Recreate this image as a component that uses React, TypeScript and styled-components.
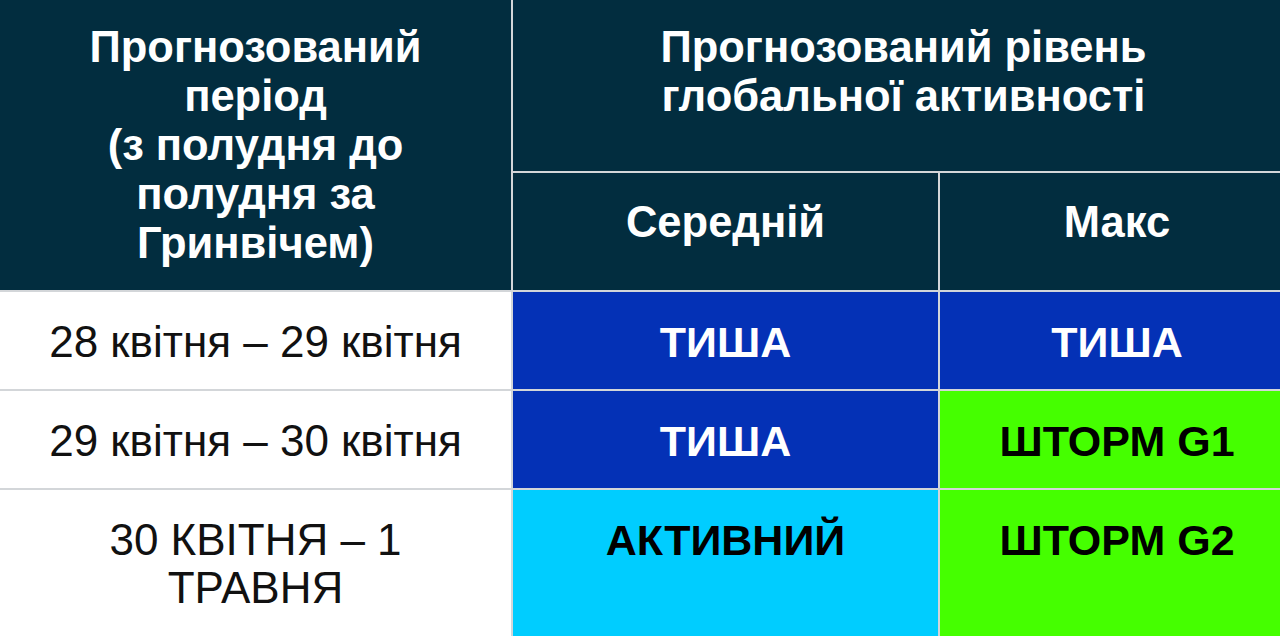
import React from 'react';
import styled, {createGlobalStyle} from 'styled-components';

const Global = createGlobalStyle`
  html, body {
    margin: 0;
    padding: 0;
    background: #ffffff;
    overflow: hidden;
  }
  body {
    font-family: "Liberation Sans", Arial, sans-serif;
  }
`

// the last column runs past the right edge of the view, like in the screenshot
const Frame = styled.div`
  width: 1280px;
  height: 636px;
  overflow: hidden;
`

const Table = styled.div`
  display: grid;
  grid-template-columns: 511px 425px 354px;
  grid-template-rows: 171px 117px 97px 97px 146px;
  gap: 2px;
  background: #d3d6d9;
  width: 1294px;
  height: 636px;
`

const Head = styled.div<{span?: string; cols?: string; side?: number; top?: number}>`
  grid-row: ${p => p.span || 'auto'};
  grid-column: ${p => p.cols || 'auto'};
  background: #022d3f;
  color: #ffffff;
  font-weight: bold;
  font-size: 43.5px;
  line-height: 49px;
  text-align: center;
  padding: ${p => p.top ?? 22}px ${p => p.side ?? 20}px 0;
`

const Period = styled.div`
  background: #ffffff;
  color: #111111;
  font-size: 44px;
  line-height: 48px;
  text-align: center;
  padding: 26px 30px 0;
`

type Tone = 'quiet' | 'active' | 'storm'

const Level = styled.div<{tone: Tone}>`
  background: ${p => p.tone === 'quiet' ? '#0431b6' : p.tone === 'active' ? '#00cdff' : '#45ff00'};
  color: ${p => p.tone === 'quiet' ? '#ffffff' : '#000000'};
  font-weight: bold;
  font-size: 43px;
  line-height: 48px;
  text-align: center;
  padding: 26px 20px 0;
`

const rows: {period: string; avg: Tone; avgText: string; max: Tone; maxText: string}[] = [
  {period: '28 квітня – 29 квітня', avg: 'quiet', avgText: 'ТИША', max: 'quiet', maxText: 'ТИША'},
  {period: '29 квітня – 30 квітня', avg: 'quiet', avgText: 'ТИША', max: 'storm', maxText: 'ШТОРМ G1'},
  {period: '30 КВІТНЯ – 1 ТРАВНЯ', avg: 'active', avgText: 'АКТИВНИЙ', max: 'storm', maxText: 'ШТОРМ G2'},
]

const App = () => {
  return (
    <Frame>
      <Global />
      <Table>
        <Head span="1 / 3" side={40} top={23}>
          Прогнозований період
          <br />
          (з полудня до полудня за Гринвічем)
        </Head>
        <Head cols="2 / 4" top={23}>
          Прогнозований рівень
          <br />
          глобальної активності
        </Head>
        <Head top={25}>Середній</Head>
        <Head top={25}>Макс</Head>
        {rows.map(r => (
          <React.Fragment key={r.period}>
            <Period>{r.period}</Period>
            <Level tone={r.avg}>{r.avgText}</Level>
            <Level tone={r.max}>{r.maxText}</Level>
          </React.Fragment>
        ))}
      </Table>
    </Frame>
  )
}

export default App;
